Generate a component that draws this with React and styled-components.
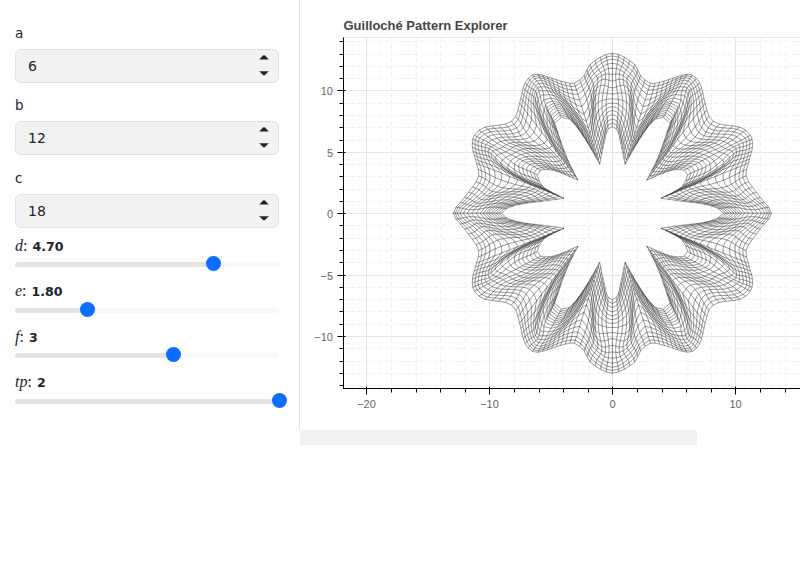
import React, { useMemo } from "react";
import styled, { createGlobalStyle } from "styled-components";

const GlobalStyle = createGlobalStyle`
  html, body {
    margin: 0;
    height: 100%;
    overflow: hidden;
    background: #fff;
    font-family: "DejaVu Sans", sans-serif;
    color: #212529;
  }
`;

const Page = styled.div`
  display: flex;
  width: 800px;
  height: 575px;
  overflow: hidden;
`;

const Sidebar = styled.aside`
  flex: 0 0 300px;
  box-sizing: border-box;
  height: 430px;
  padding: 23px 20px 0 15px;
  border-right: 1px solid #e3e3e3;
`;

const Field = styled.div`
  margin-bottom: 12.25px;

  &:nth-child(3) {
    margin-bottom: 9px;
  }
`;

const FieldLabel = styled.label`
  display: block;
  height: 20px;
  margin-bottom: 6px;
  font-size: 13.5px;
  line-height: 20px;
`;

const InputBox = styled.div`
  position: relative;
  height: 34px;
`;

const NumberInput = styled.input`
  box-sizing: border-box;
  width: 100%;
  height: 100%;
  padding: 0 12px;
  border: 1px solid #dee2e6;
  border-radius: 6px;
  background: #f2f2f2;
  color: #212529;
  font: 14px "DejaVu Sans", sans-serif;
`;

const Spinner = styled.svg`
  position: absolute;
  top: 0;
  right: 9px;
  width: 12px;
  height: 34px;
`;

const Slider = styled.div`
  margin-bottom: 15px;
`;

const SliderLabel = styled.div`
  height: 20px;
  font-size: 12.6px;
  line-height: 20px;
  white-space: nowrap;
`;

const MathVar = styled.span`
  font: italic 16px "Liberation Serif", serif;
`;

const Colon = styled.span`
  margin-right: 5px;
  font: 16px "Liberation Serif", serif;
`;

const Track = styled.div`
  position: relative;
  height: 5px;
  margin-top: 5.5px;
  border-radius: 3px;
  background: #f7f8fa;
`;

const TrackFill = styled.div`
  height: 100%;
  border-radius: 3px;
  background: #e3e3e3;
`;

const Thumb = styled.div`
  position: absolute;
  top: -6px;
  width: 15px;
  height: 15px;
  margin-left: -7.5px;
  border-radius: 50%;
  background: #0d6efd;
`;

const Main = styled.main`
  flex: 0 0 500px;
  display: flex;
  flex-direction: column;
`;

const Plot = styled.svg`
  display: block;
  width: 500px;
  height: 430px;
`;

const PlotTitle = styled.text`
  font: bold 13px "Liberation Sans", Arial, sans-serif;
  fill: #444;
  opacity: 0.99;
`;

const TickLabel = styled.text`
  font: 11px "Liberation Sans", Arial, sans-serif;
  fill: #666;
  opacity: 0.99;
`;

const ScrollBar = styled.div`
  width: 397px;
  height: 15px;
  background: #f2f2f2;
`;

// control points of one quadrant, px from the centre, split at the anchors where inner and outer line up
const INNER = [
  [[0, 86.5], [5, 83], [8.4, 70], [12.7, 49]],
  [[12.7, 49], [27.7, 75], [41, 92.5], [51, 96]],
  [[51, 96], [57.7, 91.5], [56, 85], [46, 56.5], [34.4, 33]],
  [[34.4, 33], [57.7, 42.5], [71.7, 43]],
  [[71.7, 43], [75, 37], [67.7, 25], [48.4, 15]],
  [[48.4, 15], [70, 12], [90, 9.5], [104, 5.5], [111, 0]],
];
const OUTER = [
  [[0, 160], [21, 150], [28, 138], [38, 130]],
  [[38, 130], [51, 132], [74.5, 139]],
  [[74.5, 139], [84, 135], [89, 126], [92.7, 110]],
  [[92.7, 110], [97.7, 95], [107.7, 89], [127.7, 86], [138, 78]],
  [[138, 78], [140, 66], [136, 50]],
  [[136, 50], [134, 36], [147.7, 16], [159, 0]],
];
const LINES_PER_SEG = [8, 8, 7, 9, 7, 9];

const mirrorIndex = (i) => (i < 6 ? i : i < 12 ? 11 - i : i < 18 ? i - 12 : 23 - i);

const fullLoop = (segs) => {
  const flip = (list, sx, sy) =>
    [...list].reverse().map((seg) => [...seg].reverse().map(([x, y]) => [x * sx, y * sy]));
  const q4 = flip(segs, 1, -1);
  const q3 = segs.map((seg) => seg.map(([x, y]) => [-x, -y]));
  const q2 = flip(segs, -1, 1);
  return [...segs, ...q4, ...q3, ...q2];
};

const catmull = (a, b, c, d, t) =>
  [0, 1].map(
    (i) =>
      0.5 *
      (2 * b[i] +
        (c[i] - a[i]) * t +
        (2 * a[i] - 5 * b[i] + 4 * c[i] - d[i]) * t * t +
        (3 * b[i] - a[i] - 3 * c[i] + d[i]) * t * t * t)
  );

// walk a segment by arc length and return n points (the last one is left to the next segment)
const sampleSeg = (pts, before, after, n) => {
  const all = [before, ...pts, after];
  const dense = [];
  for (let i = 1; i < all.length - 2; i++) {
    for (let k = 0; k < 24; k++) dense.push(catmull(all[i - 1], all[i], all[i + 1], all[i + 2], k / 24));
  }
  dense.push(pts[pts.length - 1]);
  const lens = [0];
  for (let i = 1; i < dense.length; i++) {
    lens.push(lens[i - 1] + Math.hypot(dense[i][0] - dense[i - 1][0], dense[i][1] - dense[i - 1][1]));
  }
  const total = lens[lens.length - 1];
  const out = [];
  let idx = 0;
  for (let k = 0; k < n; k++) {
    const want = (total * k) / n;
    while (lens[idx + 1] < want) idx++;
    const f = (want - lens[idx]) / (lens[idx + 1] - lens[idx] || 1);
    out.push([
      dense[idx][0] + (dense[idx + 1][0] - dense[idx][0]) * f,
      dense[idx][1] + (dense[idx + 1][1] - dense[idx][1]) * f,
    ]);
  }
  return out;
};

// isSharp tells which joints between segments stay as a corner
const sampleLoop = (segs, isSharp) => {
  const loop = fullLoop(segs);
  const points = [];
  loop.forEach((seg, i) => {
    const prev = loop[(i - 1 + loop.length) % loop.length];
    const next = loop[(i + 1) % loop.length];
    const before = isSharp(i) ? seg[0] : prev[prev.length - 2];
    const after = isSharp(i + 1) ? seg[seg.length - 1] : next[1];
    points.push(...sampleSeg(seg, before, after, LINES_PER_SEG[mirrorIndex(i)]));
  });
  return points;
};

const buildPattern = (cx, cy) => {
  const inner = sampleLoop(INNER, (joint) => joint % 2 === 1);
  const outer = sampleLoop(OUTER, () => false);
  const N = inner.length;

  // wave along the loop: w and c stay mirror symmetric, v flips with the mirror
  const wave = [];
  for (let i = 0; i < 24; i++) {
    const q = mirrorIndex(i);
    const n = LINES_PER_SEG[q];
    for (let k = 0; k < n; k++) {
      const t = k / n;
      wave.push({
        w: (q % 2 ? -1 : 1) * Math.sin(Math.PI * t),
        c: Math.cos(2 * Math.PI * t),
        v: Math.sin(Math.PI * (i + t)),
      });
    }
  }

  const wrap = (a) => ((a % N) + N) % N;
  const at = (list, k) => {
    const a = Math.floor(k);
    const f = k - a;
    const p = list[wrap(a)];
    const q = list[wrap(a + 1)];
    return [p[0] + (q[0] - p[0]) * f, p[1] + (q[1] - p[1]) * f];
  };

  const point = (k, s0) => {
    const a = Math.floor(k);
    const f = k - a;
    const w1 = wave[wrap(a)];
    const w2 = wave[wrap(a + 1)];
    const mix = (key) => w1[key] + (w2[key] - w1[key]) * f;
    const bump = Math.sin(Math.PI * s0);
    const s = s0 + bump * (0.05 * mix("w") + 0.055 * mix("c") * Math.cos(2 * Math.PI * s0));
    // a slight S in the lines that cross the ring, strongest towards the outer edge
    const shift = 1.4 * bump * mix("v") * Math.sin(2 * Math.PI * s0);
    const i = at(inner, k + shift);
    const o = at(outer, k + shift);
    return [cx + i[0] + (o[0] - i[0]) * s, cy - (i[1] + (o[1] - i[1]) * s)];
  };

  const fmt = ([x, y]) => `${x.toFixed(1)} ${y.toFixed(1)}`;
  let d = "";

  // lines round the ring
  const RINGS = 16;
  for (let j = 0; j <= RINGS; j++) {
    const raw = j / RINGS;
    const s = 0.65 * raw + 0.35 * (0.5 - 0.5 * Math.cos(Math.PI * raw));
    for (let k = 0; k <= N * 3; k++) {
      d += `${k ? "L" : "M"}${fmt(point(k / 3, s))}`;
    }
    d += "Z";
  }
  // lines across the ring
  for (let k = 0; k < N; k++) {
    for (let j = 0; j <= 16; j++) {
      d += `${j ? "L" : "M"}${fmt(point(k, j / 16))}`;
    }
  }
  return d;
};

const CX = 312.4;
const CY = 213.2;
const UNIT_X = 12.3;
const UNIT_Y = 12.28;
const LEFT = 43.5;
const TOP = 37.5;
const BOTTOM = 388.5;
const RIGHT = 500;

const range = (from, to, step) => {
  const out = [];
  for (let v = from; v <= to; v += step) out.push(v);
  return out;
};
const sign = (v) => (v < 0 ? `\u2212${-v}` : `${v}`);

const X_MAJOR = [-20, -10, 0, 10];
const X_MINOR = range(-20, 14, 2).filter((v) => v % 10 !== 0);
const Y_MAJOR = [-10, -5, 0, 5, 10];
const Y_MINOR = range(-14, 14, 1).filter((v) => v % 5 !== 0);
const xAt = (v) => Math.round(CX + v * UNIT_X) + 0.5;
const yAt = (v) => Math.round(CY - v * UNIT_Y) + 0.5;

const PatternChart = () => {
  const pattern = useMemo(() => buildPattern(CX, CY), []);
  return (
    <Plot viewBox="0 0 500 430">
      <PlotTitle x={LEFT} y={30}>Guilloché Pattern Explorer</PlotTitle>

      <g stroke="#efefef" strokeDasharray="4 3" fill="none">
        {X_MINOR.map((v) => <line key={v} x1={xAt(v)} x2={xAt(v)} y1={TOP} y2={BOTTOM} />)}
        {Y_MINOR.map((v) => <line key={v} x1={LEFT} x2={RIGHT} y1={yAt(v)} y2={yAt(v)} />)}
      </g>
      <g stroke="#e5e5e5" fill="none">
        {X_MAJOR.map((v) => <line key={v} x1={xAt(v)} x2={xAt(v)} y1={TOP} y2={BOTTOM} />)}
        {Y_MAJOR.map((v) => <line key={v} x1={LEFT} x2={RIGHT} y1={yAt(v)} y2={yAt(v)} />)}
        <line x1={LEFT} x2={RIGHT} y1={TOP} y2={TOP} />
      </g>

      <path d={pattern} fill="none" stroke="#333" strokeWidth="0.7" strokeOpacity="0.72" />

      <g stroke="#000" fill="none">
        <line x1={LEFT} x2={LEFT} y1={TOP} y2={BOTTOM + 0.5} />
        <line x1={LEFT} x2={RIGHT} y1={BOTTOM} y2={BOTTOM} />
        {X_MAJOR.map((v) => <line key={v} x1={xAt(v)} x2={xAt(v)} y1={BOTTOM - 2} y2={BOTTOM + 6} />)}
        {X_MINOR.map((v) => <line key={v} x1={xAt(v)} x2={xAt(v)} y1={BOTTOM} y2={BOTTOM + 4} />)}
        {Y_MAJOR.map((v) => <line key={v} x1={LEFT - 6} x2={LEFT + 2} y1={yAt(v)} y2={yAt(v)} />)}
        {Y_MINOR.map((v) => <line key={v} x1={LEFT - 4} x2={LEFT} y1={yAt(v)} y2={yAt(v)} />)}
      </g>

      {X_MAJOR.map((v) => (
        <TickLabel key={v} x={xAt(v)} y={408} textAnchor="middle">{sign(v)}</TickLabel>
      ))}
      {Y_MAJOR.map((v) => (
        <TickLabel key={v} x={33} y={yAt(v) + 4} textAnchor="end">{sign(v)}</TickLabel>
      ))}
    </Plot>
  );
};

const FIELDS = [
  { name: "a", value: 6 },
  { name: "b", value: 12 },
  { name: "c", value: 18 },
];

const SLIDERS = [
  { name: "d", value: "4.70", pct: 75.1 },
  { name: "e", value: "1.80", pct: 27.6 },
  { name: "f", value: "3", pct: 60 },
  { name: "tp", value: "2", pct: 100 },
];

const App = () => (
  <Page>
    <GlobalStyle />
    <Sidebar>
      {FIELDS.map((field) => (
        <Field key={field.name}>
          <FieldLabel>{field.name}</FieldLabel>
          <InputBox>
            <NumberInput type="text" readOnly value={field.value} />
            <Spinner viewBox="0 0 12 34">
              <path d="M1.2 10.4 L5 6.6 Q6 5.9 7 6.6 L10.8 10.4 Z" fill="#212529" />
              <path d="M1.2 22.2 L5 26 Q6 26.7 7 26 L10.8 22.2 Z" fill="#212529" />
            </Spinner>
          </InputBox>
        </Field>
      ))}
      {SLIDERS.map((slider) => (
        <Slider key={slider.name}>
          <SliderLabel>
            <MathVar>{slider.name}</MathVar>
            <Colon>:</Colon>
            <strong>{slider.value}</strong>
          </SliderLabel>
          <Track>
            <TrackFill style={{ width: `${slider.pct}%` }} />
            <Thumb style={{ left: `${slider.pct}%` }} />
          </Track>
        </Slider>
      ))}
    </Sidebar>
    <Main>
      <PatternChart />
      <ScrollBar />
    </Main>
  </Page>
);

export default App;
